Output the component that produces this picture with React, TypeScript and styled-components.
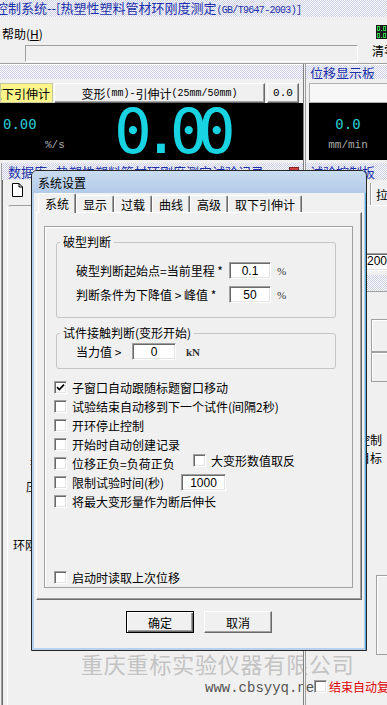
import React from "react";
import styled, { createGlobalStyle, css } from "styled-components";

const GlobalStyle = createGlobalStyle`
  html, body { margin: 0; padding: 0; }
  body {
    background: #f0f0f0;
    font-family: "Noto Sans CJK SC", "Liberation Sans", sans-serif;
    font-size: 12px;
    color: #000;
    overflow: hidden;
  }
  * { box-sizing: border-box; }
`;

const dots = css`
  background-color: #ffffff;
  background-image: repeating-conic-gradient(#c9cee6 0 25%, transparent 0 50%);
  background-size: 2px 2px;
`;

const sunken = css`
  background: #fff;
  border: 1px solid;
  border-color: #a0a0a0 #fff #fff #a0a0a0;
  box-shadow: inset 1px 1px 0 #696969, inset -1px -1px 0 #e3e3e3;
`;

const raised = css`
  background: #f0f0f0;
  border: 1px solid;
  border-color: #fff #696969 #696969 #fff;
  box-shadow: inset -1px -1px 0 #a0a0a0;
`;

const Screen = styled.div`
  position: relative;
  width: 387px;
  height: 705px;
  overflow: hidden;
  display: flex;
  flex-direction: column;
  background: #f0f0f0;
`;

/* ---------- main window chrome ---------- */

const TitleBar = styled.div`
  ${dots};
  height: 17px;
  flex-shrink: 0;
  display: flex;
  align-items: center;
  overflow: hidden;
`;

const TitleText = styled.div`
  margin-left: -5px;
  white-space: nowrap;
  color: #1b2fa8;
  font-size: 13px;
  line-height: 17px;
`;

const TitleCode = styled.span`
  font-family: "Liberation Mono", monospace;
  font-size: 10px;
  letter-spacing: -0.7px;
`;

const TopArea = styled.div`
  height: 47px;
  flex-shrink: 0;
  display: flex;
  border-bottom: 1px solid #a0a0a0;
  box-shadow: 0 1px 0 #fff;
`;

const TopLeft = styled.div`
  flex: 1;
  display: flex;
  flex-direction: column;
`;

const MenuBar = styled.div`
  height: 28px;
  padding: 5px 0 0 2px;
  display: flex;
  align-items: center;
`;

const MenuItem = styled.span`
  font-size: 12px;
  u { text-decoration: underline; }
`;

const StatusField = styled.div`
  margin-left: 25px;
  width: 333px;
  height: 17px;
  border: 1px solid;
  border-color: #a0a0a0 #fff #fff #a0a0a0;
`;

const ZeroButton = styled.div`
  width: 21px;
  display: flex;
  flex-direction: column;
  padding-top: 8px;
`;

const LedWrap = styled.div`
  margin-left: 10px;
  height: 14px;
  display: flex;
`;

const ZeroText = styled.span`
  margin-left: 6px;
  margin-top: 3px;
  white-space: nowrap;
  font-size: 12px;
`;

const Main = styled.div`
  flex: 1;
  display: flex;
  min-height: 0;
`;

const LeftPane = styled.div`
  width: 303px;
  flex-shrink: 0;
  display: flex;
  flex-direction: column;
  padding-top: 1px;
`;

const Splitter = styled.div`
  width: 3px;
  flex-shrink: 0;
  border-left: 1px solid #808080;
  border-right: 1px solid #a0a0a0;
  background: #f0f0f0;
  position: relative;
  z-index: 1;
`;

const RightPane = styled.div`
  flex: 1;
  display: flex;
  flex-direction: column;
  padding-top: 1px;
  position: relative;
  z-index: 2;
`;

const PaneHeader = styled.div<{ $h: number; $gap?: number; $indent?: number }>`
  ${dots};
  height: ${(p) => p.$h}px;
  margin-top: ${(p) => p.$gap ?? 0}px;
  flex-shrink: 0;
  display: flex;
  align-items: center;
  padding-left: ${(p) => p.$indent ?? 4}px;
  white-space: nowrap;
  overflow: hidden;
  color: #1b2fa8;
  font-size: 13px;
`;

const ChannelRow = styled.div`
  margin-top: 4px;
  height: 20px;
  display: flex;
  flex-shrink: 0;
`;

const YellowTag = styled.div`
  width: 53px;
  background: #fbf58a;
  border: 1px solid #c8c8a0;
  display: flex;
  justify-content: flex-end;
  align-items: center;
  overflow: hidden;
  white-space: nowrap;
  padding-right: 2px;
  font-size: 12px;
`;

const ChannelButton = styled.div`
  ${raised};
  width: 211px;
  margin-left: 1px;
  display: flex;
  align-items: center;
  justify-content: center;
  white-space: nowrap;
  font-size: 12px;
`;

const Ascii = styled.span`
  font-family: "Liberation Mono", monospace;
  font-size: 10px;
`;

const ValueBox = styled.div`
  ${raised};
  width: 32px;
  margin-left: 2px;
  display: flex;
  align-items: center;
  justify-content: center;
  font-family: "Liberation Mono", monospace;
  font-size: 11px;
`;

const Display = styled.div<{ $inset?: number }>`
  height: 57px;
  margin-left: ${(p) => p.$inset ?? 0}px;
  flex-shrink: 0;
  background: #000;
  display: flex;
  align-items: center;
`;

const Readout = styled.div<{ $w: number; $center?: boolean }>`
  width: ${(p) => p.$w}px;
  padding-top: 4px;
  display: flex;
  flex-direction: column;
  align-items: ${(p) => (p.$center ? "center" : "flex-start")};
`;

const ReadoutValue = styled.div<{ $indent?: number }>`
  padding-left: ${(p) => p.$indent ?? 0}px;
  font-family: "DejaVu Sans Mono", monospace;
  font-size: 14px;
  line-height: 16px;
  color: #2ccbd4;
`;

const ReadoutUnit = styled.div<{ $indent?: number }>`
  padding-left: ${(p) => p.$indent ?? 0}px;
  margin-top: 6px;
  font-family: "Liberation Mono", monospace;
  font-size: 11px;
  line-height: 14px;
  color: #a8a8a8;
`;

const BigValue = styled.div`
  margin-left: 44px;
  font-family: "DejaVu Sans Mono", monospace;
  font-size: 63px;
  line-height: 57px;
  letter-spacing: -10px;
  color: #18d4e2;
`;

const DataPanel = styled.div`
  flex: 1;
  margin-top: 3px;
  margin-left: 1px;
  border-left: 1px solid #a0a0a0;
  box-shadow: inset 1px 0 0 #696969;
  display: flex;
  flex-direction: column;
  min-height: 0;
`;

const CloseDot = styled.span`
  margin-left: auto;
  margin-right: 4px;
  width: 10px;
  height: 10px;
  background: #c84040;
  border: 1px solid #8a2020;
`;

const DataToolbar = styled.div`
  height: 23px;
  padding: 3px 0 0 10px;
  flex-shrink: 0;
`;

const DataBody = styled.div`
  flex: 1;
  margin: 2px 0 0 5px;
  border-top: 1px solid #a0a0a0;
  border-left: 1px solid #fff;
  border-top-left-radius: 4px;
  display: flex;
  flex-direction: column;
`;

const FormLabel = styled.div<{ $indent: number; $top: number }>`
  margin: ${(p) => p.$top}px 0 0 ${(p) => p.$indent}px;
  white-space: nowrap;
  font-size: 12px;
  line-height: 14px;
`;

const Watermark = styled.div`
  margin: auto 0 0 73px;
  white-space: nowrap;
  font-size: 22px;
  line-height: 26px;
  letter-spacing: 0.8px;
  color: #c3c3c3;
`;

const Url = styled.div`
  margin: 4px 0 9px 197px;
  white-space: nowrap;
  font-family: "Liberation Mono", monospace;
  font-size: 14px;
  line-height: 16px;
  color: #555;
`;

/* right pane pieces */

const SpeedBox = styled.div`
  margin: 4px 0 0 3px;
  height: 20px;
  flex-shrink: 0;
  background: #f7f7f7;
  border: 1px solid #b0b0b0;
`;

const SideTab = styled.div`
  margin: 3px 0 0 65px;
  height: 22px;
  flex-shrink: 0;
  border-left: 1px solid #fff;
  box-shadow: -1px 0 0 #a0a0a0;
  padding: 3px 0 0 4px;
  white-space: nowrap;
  font-size: 12px;
`;

const SideBody = styled.div`
  flex: 1;
  border-top: 1px solid #fff;
  display: flex;
  flex-direction: column;
`;

const SideInput = styled.div`
  ${sunken};
  margin: 47px 0 0 55px;
  height: 18px;
  padding-left: 5px;
  font-family: "Liberation Sans", sans-serif;
  font-size: 12px;
  line-height: 15px;
`;

const SideBand = styled.div`
  ${dots};
  margin-top: 4px;
  height: 17px;
  border-bottom: 1px solid #a0a0a0;
`;

const SideBox = styled.div<{ $top: number; $h: number; $indent: number }>`
  margin: ${(p) => p.$top}px 0 0 ${(p) => p.$indent}px;
  height: ${(p) => p.$h}px;
  flex-shrink: 0;
  border: 1px solid #a0a0a0;
  border-right: none;
  box-shadow: inset 1px 1px 0 #fff;
`;

const SideLabel = styled.div<{ $top: number }>`
  margin: ${(p) => p.$top}px 0 0 52px;
  white-space: nowrap;
  font-size: 12px;
  line-height: 18px;
`;

const RedOption = styled.div`
  margin: auto 0 10px 8px;
  display: flex;
  align-items: center;
  gap: 2px;
  white-space: nowrap;
  color: #e00000;
  font-size: 12px;
`;

/* ---------- dialog ---------- */

const Dialog = styled.div`
  position: absolute;
  left: 31px;
  top: 170px;
  width: 336px;
  height: 481px;
  z-index: 10;
  border: 1px solid #262626;
  border-radius: 6px 6px 0 0;
  background: #b7d1ec;
  box-shadow: inset -1px 0 0 #58a8d8;
  display: flex;
  flex-direction: column;
`;

const DialogTitle = styled.div`
  height: 22px;
  flex-shrink: 0;
  padding-left: 6px;
  display: flex;
  align-items: center;
  border-radius: 5px 5px 0 0;
  background: linear-gradient(#c9dcf1, #b1cbe8);
  font-size: 12px;
`;

const Client = styled.div`
  flex: 1;
  margin: 0 2px 2px;
  background: #f0f0f0;
  display: flex;
  flex-direction: column;
`;

const TabRow = styled.div`
  height: 19px;
  padding-left: 4px;
  display: flex;
  align-items: flex-end;
  flex-shrink: 0;
`;

const Tab = styled.div<{ $active?: boolean }>`
  height: ${(p) => (p.$active ? 20 : 17)}px;
  margin-bottom: ${(p) => (p.$active ? -1 : 0)}px;
  padding: ${(p) => (p.$active ? 0 : 1)}px 6px 0;
  display: flex;
  align-items: center;
  background: #f0f0f0;
  border-top: 1px solid #fff;
  border-left: 1px solid #fff;
  border-right: 1px solid #696969;
  box-shadow: inset -1px 0 0 #a0a0a0;
  border-radius: 2px 2px 0 0;
  position: relative;
  z-index: ${(p) => (p.$active ? 2 : 0)};
  white-space: nowrap;
  font-size: 12px;
`;

const TabPanel = styled.div`
  height: 388px;
  margin: 0 2px;
  flex-shrink: 0;
  border: 1px solid;
  border-color: #fff #696969 #696969 #fff;
  box-shadow: inset -1px -1px 0 #a0a0a0;
  padding: 13px 8px 11px 7px;
`;

const Frame = styled.div`
  height: 100%;
  border: 1px solid #a0a0a0;
  box-shadow: inset 1px 1px 0 #fff;
  display: flex;
  flex-direction: column;
  padding-top: 8px;
`;

const Group = styled.fieldset<{ $h: number; $top?: number }>`
  margin: ${(p) => p.$top ?? 0}px 0 0 11px;
  width: 280px;
  height: ${(p) => p.$h}px;
  padding: 0;
  border: 1px solid #c6c6c6;
  border-radius: 3px;
  min-width: 0;
`;

const Legend = styled.legend`
  margin-left: 3px;
  padding: 0 3px;
  font-size: 12px;
  line-height: 14px;
`;

const ParamGrid = styled.div<{ $label: number; $top: number; $gap: number }>`
  display: grid;
  grid-template-columns: ${(p) => p.$label}px auto auto;
  justify-content: start;
  align-items: center;
  row-gap: ${(p) => p.$gap}px;
  padding: ${(p) => p.$top}px 0 0 19px;
`;

const ParamLabel = styled.span`
  white-space: pre;
  font-size: 12px;
`;

const NumBox = styled.div<{ $w: number }>`
  ${sunken};
  width: ${(p) => p.$w}px;
  height: 17px;
  display: flex;
  align-items: center;
  justify-content: center;
  font-family: "Liberation Sans", sans-serif;
  font-size: 12px;
`;

const Unit = styled.span<{ $gap: number; $bold?: boolean }>`
  margin-left: ${(p) => p.$gap}px;
  font-family: "Liberation Serif", serif;
  font-size: 11px;
  font-weight: ${(p) => (p.$bold ? 700 : 400)};
  color: #333;
`;

const CheckRow = styled.div<{ $push?: boolean }>`
  height: 19px;
  flex-shrink: 0;
  display: flex;
  align-items: center;
  padding-left: 9px;
  margin-top: ${(p) => (p.$push ? "auto" : "0")};
`;

const FirstRow = styled(CheckRow)`
  margin-top: 9px;
`;

const Box = styled.span<{ $lift?: boolean }>`
  ${sunken};
  width: 13px;
  height: 13px;
  flex-shrink: 0;
  display: flex;
  align-items: center;
  justify-content: center;
  margin-bottom: ${(p) => (p.$lift ? 6 : 0)}px;
`;

const CheckText = styled.span<{ $w?: number; $lift?: boolean }>`
  margin-left: 5px;
  white-space: nowrap;
  font-size: 12px;
  ${(p) => (p.$w ? `width: ${p.$w}px; flex-shrink: 0;` : "")}
  margin-bottom: ${(p) => (p.$lift ? 6 : 0)}px;
`;

const ButtonRow = styled.div`
  flex: 1;
  display: flex;
  justify-content: center;
  align-items: flex-start;
  gap: 10px;
  padding-top: 11px;
`;

const PushButton = styled.div<{ $default?: boolean }>`
  width: 68px;
  height: 22px;
  display: flex;
  align-items: center;
  justify-content: center;
  font-size: 12px;
  background: #f0f0f0;
  border: 1px solid;
  border-color: ${(p) => (p.$default ? "#000" : "#fff #696969 #696969 #fff")};
  box-shadow: ${(p) =>
    p.$default
      ? "inset 1px 1px 0 #fff, inset -1px -1px 0 #696969, inset -2px -2px 0 #a0a0a0"
      : "inset -1px -1px 0 #a0a0a0"};
`;

/* ---------- small drawings ---------- */

const Led = () => (
  <svg width="11" height="14" viewBox="0 0 11 14">
    <rect width="11" height="14" fill="#1a1a1a" />
    {[1, 8].map((y) => (
      <g key={y} fill="#2fd04a">
        <rect x="1" y={y} width="3" height="1" />
        <rect x="1" y={y} width="1" height="5" />
        <rect x="3" y={y} width="1" height="5" />
        <rect x="1" y={y + 4} width="3" height="1" />
        <rect x="5" y={y + 4} width="1" height="1" />
        <rect x="7" y={y} width="3" height="1" />
        <rect x="7" y={y} width="1" height="5" />
        <rect x="9" y={y} width="1" height="5" />
        <rect x="7" y={y + 4} width="3" height="1" />
      </g>
    ))}
  </svg>
);

const DocIcon = () => (
  <svg width="11" height="14" viewBox="0 0 11 14">
    <path d="M0.5 0.5 H7 L10.5 4 V13.5 H0.5 Z" fill="#fff" stroke="#000" />
    <path d="M7 0.5 V4 H10.5" fill="none" stroke="#000" />
  </svg>
);

const Tick = () => (
  <svg width="9" height="9" viewBox="0 0 9 9">
    <path d="M1 4.2 L3.3 6.6 L8 1.6" fill="none" stroke="#000" strokeWidth="1.7" />
  </svg>
);

const Check = ({ on, lift }: { on?: boolean; lift?: boolean }) => (
  <Box $lift={lift}>{on ? <Tick /> : null}</Box>
);

export default function App() {
  return (
    <>
      <GlobalStyle />
      <Screen>
        <TitleBar>
          <TitleText>
            控制系统--[热塑性塑料管材环刚度测定<TitleCode>(GB/T9647-2003)]</TitleCode>
          </TitleText>
        </TitleBar>

        <TopArea>
          <TopLeft>
            <MenuBar>
              <MenuItem>
                帮助(<u>H</u>)
              </MenuItem>
            </MenuBar>
            <StatusField />
          </TopLeft>
          <ZeroButton>
            <LedWrap>
              <Led />
            </LedWrap>
            <ZeroText>清零</ZeroText>
          </ZeroButton>
        </TopArea>

        <Main>
          <LeftPane>
            <PaneHeader $h={14} />
            <ChannelRow>
              <YellowTag>取下引伸计</YellowTag>
              <ChannelButton>
                变形<Ascii>(mm)-</Ascii>引伸计<Ascii>(25mm/50mm)</Ascii>
              </ChannelButton>
              <ValueBox>0.0</ValueBox>
            </ChannelRow>
            <Display>
              <Readout $w={70}>
                <ReadoutValue $indent={3}>0.00</ReadoutValue>
                <ReadoutUnit $indent={45}>%/s</ReadoutUnit>
              </Readout>
              <BigValue>0.00</BigValue>
            </Display>
            <DataPanel>
              <PaneHeader $h={17} $indent={6}>
                数据库--热塑性塑料管材环刚度测定试验记录
                <CloseDot />
              </PaneHeader>
              <DataToolbar>
                <DocIcon />
              </DataToolbar>
              <DataBody>
                <FormLabel $indent={22} $top={250}>
                  打印
                </FormLabel>
                <FormLabel $indent={18} $top={10}>
                  压力
                </FormLabel>
                <FormLabel $indent={5} $top={44}>
                  环刚度
                </FormLabel>
                <Watermark>重庆重标实验仪器有限公司</Watermark>
                <Url>www.cbsyyq.net</Url>
              </DataBody>
            </DataPanel>
          </LeftPane>

          <Splitter />

          <RightPane>
            <PaneHeader $h={14}>位移显示板</PaneHeader>
            <SpeedBox />
            <Display $inset={3}>
              <Readout $w={78} $center>
                <ReadoutValue>0.0</ReadoutValue>
                <ReadoutUnit>mm/min</ReadoutUnit>
              </Readout>
            </Display>
            <PaneHeader $h={17} $gap={3}>
              试验控制板
            </PaneHeader>
            <SideTab>拉伸</SideTab>
            <SideBody>
              <SideInput>200</SideInput>
              <SideBand />
              <SideBox $top={27} $h={33} $indent={65} />
              <SideBox $top={0} $h={30} $indent={65} />
              <SideLabel $top={49}>控制</SideLabel>
              <SideLabel $top={0}>目标</SideLabel>
              <SideBox $top={108} $h={80} $indent={70} />
              <RedOption>
                <Check />
                <span>结束自动复位</span>
              </RedOption>
            </SideBody>
          </RightPane>
        </Main>

        <Dialog>
          <DialogTitle>系统设置</DialogTitle>
          <Client>
            <TabRow>
              <Tab $active>系统</Tab>
              <Tab>显示</Tab>
              <Tab>过载</Tab>
              <Tab>曲线</Tab>
              <Tab>高级</Tab>
              <Tab>取下引伸计</Tab>
            </TabRow>
            <TabPanel>
              <Frame>
                <Group $h={83}>
                  <Legend>破型判断</Legend>
                  <ParamGrid $label={153} $top={13} $gap={7}>
                    <ParamLabel>破型判断起始点=当前里程 *</ParamLabel>
                    <NumBox $w={42}>0.1</NumBox>
                    <Unit $gap={6}>%</Unit>
                    <ParamLabel>判断条件为下降值 &gt; 峰值 *</ParamLabel>
                    <NumBox $w={42}>50</NumBox>
                    <Unit $gap={6}>%</Unit>
                  </ParamGrid>
                </Group>
                <Group $h={43} $top={8}>
                  <Legend>试件接触判断(变形开始)</Legend>
                  <ParamGrid $label={56} $top={3} $gap={0}>
                    <ParamLabel>当力值 &gt;</ParamLabel>
                    <NumBox $w={44}>0</NumBox>
                    <Unit $gap={10} $bold>
                      kN
                    </Unit>
                  </ParamGrid>
                </Group>

                <FirstRow>
                  <Check on />
                  <CheckText>子窗口自动跟随标题窗口移动</CheckText>
                </FirstRow>
                <CheckRow>
                  <Check />
                  <CheckText>试验结束自动移到下一个试件(间隔2秒)</CheckText>
                </CheckRow>
                <CheckRow>
                  <Check />
                  <CheckText>开环停止控制</CheckText>
                </CheckRow>
                <CheckRow>
                  <Check />
                  <CheckText>开始时自动创建记录</CheckText>
                </CheckRow>
                <CheckRow>
                  <Check />
                  <CheckText $w={121}>位移正负=负荷正负</CheckText>
                  <Check lift />
                  <CheckText $lift>大变形数值取反</CheckText>
                </CheckRow>
                <CheckRow>
                  <Check />
                  <CheckText $w={109}>限制试验时间(秒)</CheckText>
                  <NumBox $w={45}>1000</NumBox>
                </CheckRow>
                <CheckRow>
                  <Check />
                  <CheckText>将最大变形量作为断后伸长</CheckText>
                </CheckRow>
                <CheckRow $push>
                  <Check />
                  <CheckText>启动时读取上次位移</CheckText>
                </CheckRow>
              </Frame>
            </TabPanel>
            <ButtonRow>
              <PushButton $default>确定</PushButton>
              <PushButton>取消</PushButton>
            </ButtonRow>
          </Client>
        </Dialog>
      </Screen>
    </>
  );
}
